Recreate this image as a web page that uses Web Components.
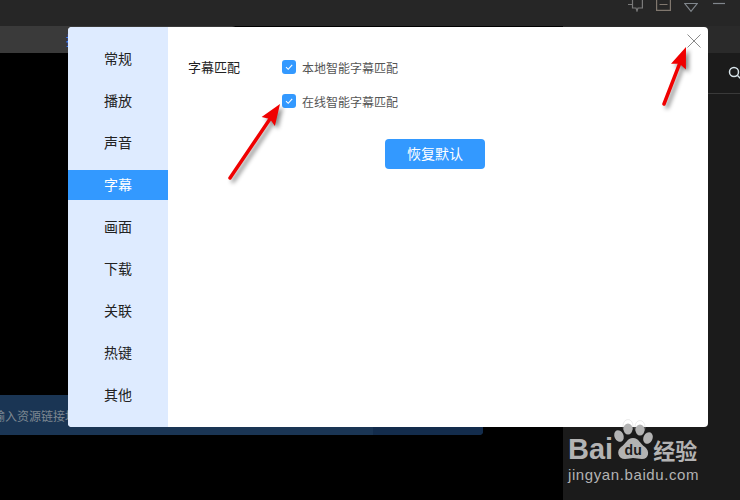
<!DOCTYPE html>
<html lang="zh">
<head>
<meta charset="utf-8">
<title>设置</title>
<style>
    html, body { margin: 0; width: 740px; height: 500px; overflow: hidden; background: #000; }
    body { font-family: "Noto Sans CJK SC", "Liberation Sans", sans-serif; }
</style>
</head>
<body>

<player-shell>
    <settings-dialog>
        <nav-item>常规</nav-item>
        <nav-item>播放</nav-item>
        <nav-item>声音</nav-item>
        <nav-item active>字幕</nav-item>
        <nav-item>画面</nav-item>
        <nav-item>下载</nav-item>
        <nav-item>关联</nav-item>
        <nav-item>热键</nav-item>
        <nav-item>其他</nav-item>

        <check-row slot="options">本地智能字幕匹配</check-row>
        <check-row slot="options">在线智能字幕匹配</check-row>
    </settings-dialog>
    <red-arrow style="left:224px;top:102px" x1="6" y1="76" x2="56" y2="2"></red-arrow>
    <red-arrow style="left:658px;top:42px" x1="6" y1="62" x2="28" y2="5"></red-arrow>
    <baidu-mark></baidu-mark>
</player-shell>

<script>
class PlayerShell extends HTMLElement {

    constructor() {
        super();
        this.shadow = this.attachShadow({mode: 'open'});
        this.render();
    }

    render() {
        this.shadow.innerHTML =
        /*html*/
        `
        <style>
            :host{
                display:grid;
                grid-template-rows:26px 1fr;
                width:740px;
                height:500px;
                position:relative;
                overflow:hidden;
                background:#000;
            }
            .title{
                display:flex;
                justify-content:flex-end;
                align-items:flex-start;
                gap:13px;
                padding-right:15px;
                background:#262626;
            }
            .title svg{ display:block; }
            .body{
                display:grid;
                grid-template-columns:563px 177px;
                min-height:0;
            }
            .left{
                display:flex;
                flex-direction:column;
                background:#000;
            }
            .tabs{
                width:238px;
                height:27px;
                flex:none;
                box-sizing:border-box;
                background:#3a3a3a;
                border-top-right-radius:6px;
                color:#3f8df0;
                font-size:13px;
                line-height:27px;
                padding-left:66px;
                overflow:hidden;
                white-space:nowrap;
            }
            .video{ flex:1; }
            .link{
                display:flex;
                width:483px;
                height:40px;
                margin-bottom:65px;
                flex:none;
                background:#1a3554;
                border-bottom-right-radius:4px;
            }
            .link span{
                flex:1;
                margin-left:-7px;
                color:#7d8791;
                font-size:12px;
                line-height:42px;
                white-space:nowrap;
                overflow:hidden;
            }
            .link i{
                width:110px;
                background:#132c4c;
                border-bottom-right-radius:4px;
            }
            .right{
                display:flex;
                flex-direction:column;
                background:#1b1b1b;
            }
            .right-top{
                height:27px;
                flex:none;
                background:#2a2a2a;
            }
            .search{
                height:40px;
                flex:none;
                display:flex;
                justify-content:flex-end;
                align-items:center;
                overflow:hidden;
                border-bottom:1px solid #3a3a3a;
            }
            .search svg{ flex:none; margin-right:-2px; }
        </style>

        <div class="title">
            <svg width="15" height="12" viewBox="0 0 15 12" fill="none" stroke="#7a7a7a" stroke-width="1.2">
                <path d="M0 4.500H4.500M4.500 -1V8H8L9 11L10 8H14.400V-1"/>
            </svg>
            <svg width="15" height="11" viewBox="0 0 15 11" fill="none" stroke="#80776e" stroke-width="1.200">
                <path d="M.6-1V10.400H14.400V-1M3.500 4.500H11.500"/>
            </svg>
            <svg width="14" height="13" viewBox="0 0 14 13" fill="none" stroke="#80868c" stroke-width="1.200">
                <path d="M.8 3.500H13.200L7 11.400Z"/>
            </svg>
            <svg width="12" height="5" viewBox="0 0 12 5" fill="none" stroke="#80868c" stroke-width="1.200" style="margin-left:2px">
                <path d="M0 3.500H12"/>
            </svg>
        </div>

        <div class="body">
            <div class="left">
                <div class="tabs">搜索资源</div>
                <div class="video"></div>
                <div class="link"><span>输入资源链接地址</span><i></i></div>
            </div>
            <div class="right">
                <div class="right-top"></div>
                <div class="search">
                    <svg width="14" height="14" viewBox="0 0 14 14" fill="none" stroke="#d8e4ea" stroke-width="1.500">
                        <circle cx="6" cy="6" r="4.500"/>
                        <path d="M9.500 9.500L13 13"/>
                    </svg>
                </div>
            </div>
        </div>
        <slot></slot>
        `;
    }
}

class SettingsDialog extends HTMLElement {

    constructor() {
        super();
        this.shadow = this.attachShadow({mode: 'open'});
        this.render();
    }

    render() {
        this.shadow.innerHTML =
        /*html*/
        `
        <style>
            :host{
                display:flex;
                position:absolute;
                left:68px;
                top:27px;
                width:640px;
                height:400px;
                background:#fff;
                border-radius:4px;
                overflow:hidden;
            }
            aside{
                width:100px;
                flex:none;
                box-sizing:border-box;
                padding-top:17px;
                display:flex;
                flex-direction:column;
                gap:12px;
                background:#deebff;
            }
            main{
                flex:1;
                position:relative;
                padding:24px 0 0 20px;
            }
            .row{
                display:flex;
                align-items:flex-start;
                margin-top:-1px;
            }
            .label{
                width:94px;
                flex:none;
                font-size:13px;
                line-height:34px;
                color:#222;
                height:34px;
            }
            .options{
                display:flex;
                flex-direction:column;
            }
            .reset{
                display:block;
                width:100px;
                height:30px;
                margin:21px 0 0 197px;
                padding:0 0 1px;
                border:0;
                border-radius:4px;
                background:#3399ff;
                color:#fff;
                font:14px/29px "Noto Sans CJK SC", sans-serif;
            }
            .close{
                position:absolute;
                right:7px;
                top:7px;
                display:block;
            }
        </style>

        <aside><slot></slot></aside>
        <main>
            <div class="row">
                <div class="label">字幕匹配</div>
                <div class="options"><slot name="options"></slot></div>
            </div>
            <button class="reset">恢复默认</button>
            <svg class="close" width="14" height="14" viewBox="0 0 14 14" fill="none" stroke="#8a8a8a" stroke-width="1">
                <path d="M.5 .5L13.500 13.500M13.500 .5L.5 13.500"/>
            </svg>
        </main>
        `;
    }
}

class NavItem extends HTMLElement {

    constructor() {
        super();
        this.shadow = this.attachShadow({mode: 'open'});
        this.shadow.innerHTML =
        /*html*/
        `
        <style>
            :host{
                display:block;
                height:30px;
                line-height:28px;
                text-align:center;
                font-size:14px;
                color:#222;
            }
            :host([active]){
                background:#3399ff;
                color:#fff;
            }
        </style>
        <slot></slot>
        `;
    }
}

class CheckRow extends HTMLElement {

    constructor() {
        super();
        this.shadow = this.attachShadow({mode: 'open'});
        this.shadow.innerHTML =
        /*html*/
        `
        <style>
            :host{
                display:flex;
                align-items:center;
                gap:6px;
                height:34px;
                font-size:12px;
                color:#555;
            }
            .box{
                width:14px;
                height:14px;
                flex:none;
                border-radius:3px;
                background:#3399ff;
                display:block;
            }
        </style>
        <svg class="box" viewBox="0 0 14 14" fill="none" stroke="#fff" stroke-width="1.100">
            <path d="M4 7.200L6.200 9.300L10.200 4.800"/>
        </svg>
        <span><slot></slot></span>
        `;
    }
}

class RedArrow extends HTMLElement {

    constructor() {
        super();
        this.shadow = this.attachShadow({mode: 'open'});
    }

    connectedCallback() {
        let x1 = +this.getAttribute('x1');
        let y1 = +this.getAttribute('y1');
        let x2 = +this.getAttribute('x2');
        let y2 = +this.getAttribute('y2');
        let len = Math.hypot(x2 - x1, y2 - y1);
        let ux = (x2 - x1) / len;
        let uy = (y2 - y1) / len;
        // head: 21 long, 8 to each side, with a slight notch
        let bx = x2 - ux * 21;
        let by = y2 - uy * 21;
        let nx = x2 - ux * 18;
        let ny = y2 - uy * 18;
        let head = [
            [x2, y2],
            [bx - uy * 8, by + ux * 8],
            [nx, ny],
            [bx + uy * 8, by - ux * 8]
        ].map(p => p[0].toFixed(1) + ',' + p[1].toFixed(1)).join(' ');

        this.shadow.innerHTML =
        /*html*/
        `
        <style>
            :host{
                display:block;
                position:absolute;
                width:80px;
                height:90px;
                pointer-events:none;
            }
            svg{
                display:block;
                overflow:visible;
                filter:drop-shadow(3px 3px 2px rgba(0,0,0,.45));
            }
        </style>
        <svg width="80" height="90" viewBox="0 0 80 90">
            <line x1="${x1}" y1="${y1}" x2="${nx}" y2="${ny}" stroke="#f00000" stroke-width="3.500" stroke-linecap="round"/>
            <polygon points="${head}" fill="#f00000"/>
        </svg>
        `;
    }
}

class BaiduMark extends HTMLElement {

    constructor() {
        super();
        this.shadow = this.attachShadow({mode: 'open'});
        this.shadow.innerHTML =
        /*html*/
        `
        <style>
            :host{
                display:block;
                position:absolute;
                left:568px;
                top:418px;
                width:150px;
                height:76px;
                color:#b3b3b3;
                font-family:"Liberation Sans", sans-serif;
            }
            .top{
                display:flex;
                align-items:flex-end;
                height:45px;
            }
            .bai{
                font-size:29px;
                line-height:28px;
                font-weight:700;
            }
            .paw{
                position:relative;
                width:41px;
                height:45px;
                flex:none;
                margin-left:-1px;
            }
            .paw svg{ display:block; }
            .du{
                position:absolute;
                left:10px;
                top:25px;
                width:22px;
                text-align:center;
                font-size:14px;
                line-height:14px;
                font-weight:700;
                color:#1b1b1b;
            }
            .jing{
                font:700 22px/28px "Noto Sans CJK SC", sans-serif;
                height:28px;
                white-space:nowrap;
            }
            .url{
                margin-top:3px;
                font-size:15px;
                line-height:18px;
                letter-spacing:.6px;
                white-space:nowrap;
            }
        </style>
        <div class="top">
            <span class="bai">Bai</span>
            <span class="paw">
                <svg width="41" height="45" viewBox="0 0 41 45">
                    <ellipse cx="16" cy="8" rx="5" ry="6.500" fill="none" stroke="#d8d8d8" stroke-opacity=".5" stroke-width="1"/>
                    <ellipse cx="28" cy="9" rx="5" ry="6.500" fill="none" stroke="#d8d8d8" stroke-opacity=".5" stroke-width="1"/>
                    <ellipse cx="7" cy="18" rx="4.500" ry="6" fill="currentColor" transform="rotate(-25 7 18)"/>
                    <ellipse cx="16" cy="11" rx="4.500" ry="5.500" fill="currentColor"/>
                    <ellipse cx="28" cy="12" rx="4.500" ry="5.500" fill="currentColor"/>
                    <ellipse cx="36" cy="20" rx="4.500" ry="6" fill="currentColor" transform="rotate(25 36 20)"/>
                    <path d="M21 20C15 20 14 26 9 29C4 33 6 41 13 41C17 41 19 40 21 40C24 40 26 41 30 41C37 41 38 33 33 29C28 26 27 20 21 20Z" fill="currentColor"/>
                </svg>
                <span class="du">du</span>
            </span>
            <span class="jing">经验</span>
        </div>
        <div class="url">jingyan.baidu.com</div>
        `;
    }
}

customElements.define('player-shell', PlayerShell);
customElements.define('settings-dialog', SettingsDialog);
customElements.define('nav-item', NavItem);
customElements.define('check-row', CheckRow);
customElements.define('red-arrow', RedArrow);
customElements.define('baidu-mark', BaiduMark);
</script>
</body>
</html>
